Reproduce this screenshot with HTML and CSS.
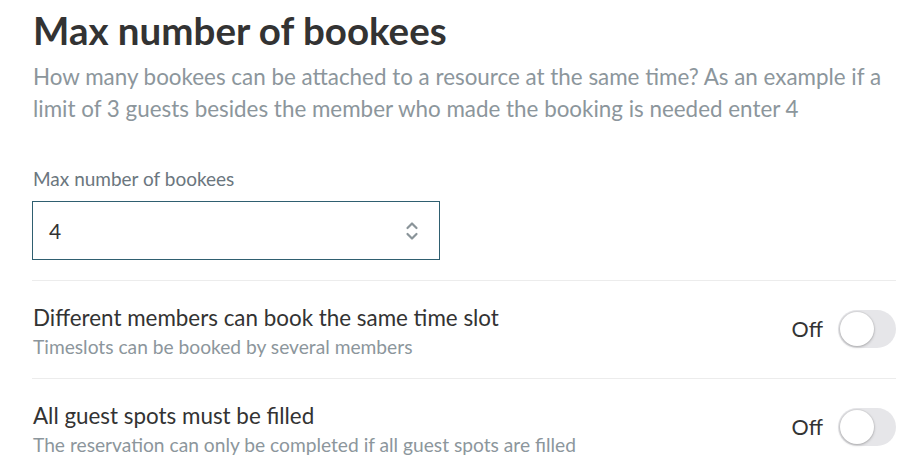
FILE: index.html
```html
<!DOCTYPE html>
<html lang="en">
<head>
<meta charset="utf-8">
<title>Max number of bookees</title>
<link rel="stylesheet" href="styles.css">
</head>
<body>
<main class="page">
  <h1 class="title">Max number of bookees</h1>
  <p class="desc">How many bookees can be attached to a resource at the same time? As an example if a limit of 3 guests besides the member who made the booking is needed enter 4</p>

  <div class="field">
    <label class="field-label" for="max">Max number of bookees</label>
    <div class="number-input">
      <span class="number-value" id="max">4</span>
      <svg class="spinner" width="14" height="22" viewBox="0 0 14 22" aria-hidden="true">
        <path d="M2.5 8 L7 3.5 L11.5 8" fill="none" stroke="#8a9499" stroke-width="2.2" stroke-linecap="round" stroke-linejoin="round"/>
        <path d="M2.5 14 L7 18.5 L11.5 14" fill="none" stroke="#8a9499" stroke-width="2.2" stroke-linecap="round" stroke-linejoin="round"/>
      </svg>
    </div>
  </div>

  <div class="setting">
    <div class="setting-text">
      <div class="setting-title">Different members can book the same time slot</div>
      <div class="setting-sub">Timeslots can be booked by several members</div>
    </div>
    <div class="setting-control">
      <span class="state">Off</span>
      <span class="toggle"><span class="knob"></span></span>
    </div>
  </div>

  <div class="setting">
    <div class="setting-text">
      <div class="setting-title">All guest spots must be filled</div>
      <div class="setting-sub">The reservation can only be completed if all guest spots are filled</div>
    </div>
    <div class="setting-control">
      <span class="state">Off</span>
      <span class="toggle"><span class="knob"></span></span>
    </div>
  </div>
</main>
</body>
</html>
```

FILE: styles.css
```css
* { box-sizing: border-box; }

html, body {
  margin: 0;
  padding: 0;
  background: #ffffff;
}

body {
  font-family: Lato, "Open Sans", sans-serif;
  color: #333333;
}

.page {
  padding: 6px 28px 0 33px;
}

.title {
  margin: 0;
  font-size: 38.5px;
  font-weight: 700;
  line-height: 48px;
  color: #333333;
}

.desc {
  margin: 7px 0 0;
  font-size: 22.4px;
  line-height: 32px;
  color: #8c969c;
}

.field {
  margin-top: 42px;
  display: flex;
  flex-direction: column;
}

.field-label {
  font-size: 19px;
  line-height: 24px;
  color: #6b767e;
  margin-bottom: 10px;
}

.number-input {
  width: 408px;
  height: 59px;
  margin-left: -1px;
  border: 1px solid #2f5f70;
  display: flex;
  align-items: center;
  justify-content: space-between;
  padding: 0 20px 0 16px;
}

.number-value {
  font-size: 21px;
  color: #333333;
}

.spinner {
  display: block;
}

.setting {
  margin-top: 20px;
  margin-left: -1px;
  border-top: 1px solid #ececec;
  display: flex;
  align-items: flex-start;
  justify-content: space-between;
  padding: 22px 0 17px 1px;
}

.setting + .setting {
  margin-top: 0;
}

.setting-text {
  display: flex;
  flex-direction: column;
}

.setting-title {
  font-size: 22.4px;
  line-height: 30px;
  color: #333333;
}

.setting-sub {
  font-size: 19.2px;
  line-height: 28px;
  color: #8c969c;
}

.setting-control {
  margin-top: 7px;
  display: flex;
  align-items: center;
  gap: 15px;
}

.state {
  font-size: 21.5px;
  color: #333333;
}

.toggle {
  width: 58px;
  height: 38px;
  border-radius: 19px;
  background: #e6e6e9;
  display: flex;
  align-items: center;
  padding: 2px;
}

.knob {
  width: 34px;
  height: 34px;
  border-radius: 50%;
  background: #ffffff;
  box-shadow: 0 1px 3px rgba(0, 0, 0, 0.25), 0 0 0 1px rgba(0, 0, 0, 0.04);
}
```
